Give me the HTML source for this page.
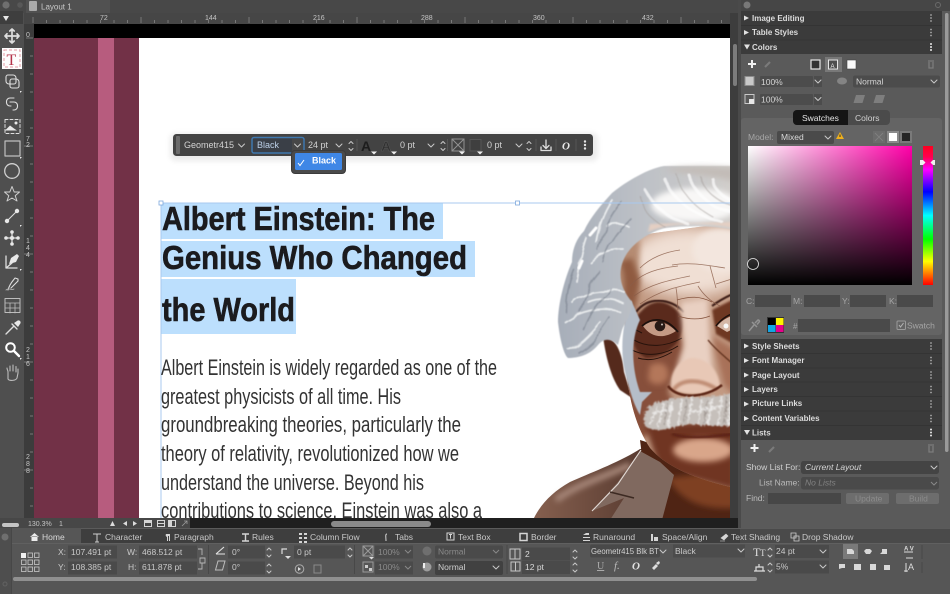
<!DOCTYPE html>
<html><head><meta charset="utf-8"><style>
html,body{margin:0;padding:0;background:#565656;width:950px;height:594px;overflow:hidden}
svg{display:block;filter:blur(.3px)}
text{font-family:"Liberation Sans",sans-serif;font-size:8px;fill:#c9c9c9}
.b{font-weight:bold;fill:#dcdcdc}
.d{fill:#8a8a8a}
.m{fill:#9d9d9d}
.f{fill:#4a4a4a}
.ic{fill:none;stroke:#dedede;stroke-width:1.3;stroke-linecap:round;stroke-linejoin:round}
.ch{fill:none;stroke:#c8c8c8;stroke-width:1;stroke-linecap:round;stroke-linejoin:round}
.r{font-size:7px;fill:#c4c4c4}
</style></head><body>
<svg width="950" height="594" viewBox="0 0 950 594" xmlns="http://www.w3.org/2000/svg">
<defs>
<linearGradient id="pk" x1="0" x2="1" y1="0" y2="0"><stop offset="0" stop-color="#fff"/><stop offset="1" stop-color="#ff00a8"/></linearGradient>
<linearGradient id="bk" x1="0" x2="0" y1="0" y2="1"><stop offset="0" stop-color="#000" stop-opacity="0"/><stop offset="1" stop-color="#000"/></linearGradient>
<linearGradient id="hue" x1="0" x2="0" y1="0" y2="1"><stop offset="0" stop-color="#ff0020"/><stop offset=".08" stop-color="#ff0050"/><stop offset=".17" stop-color="#ff00ff"/><stop offset=".33" stop-color="#0000ff"/><stop offset=".5" stop-color="#00ffff"/><stop offset=".67" stop-color="#00ff00"/><stop offset=".83" stop-color="#ffff00"/><stop offset="1" stop-color="#ff0000"/></linearGradient>
<linearGradient id="hair" x1="0" x2="1" y1="0" y2="0"><stop offset="0" stop-color="#a7aeb9"/><stop offset=".45" stop-color="#bcc0c6"/><stop offset="1" stop-color="#d2cfcc"/></linearGradient>
<linearGradient id="jack" x1="0" x2="1" y1="0" y2="0"><stop offset="0" stop-color="#86604f"/><stop offset=".5" stop-color="#5c3e33"/><stop offset="1" stop-color="#3a2019"/></linearGradient>
<filter id="b1" x="-30%" y="-30%" width="160%" height="160%"><feGaussianBlur stdDeviation="1"/></filter>
<filter id="b2" x="-40%" y="-40%" width="180%" height="180%"><feGaussianBlur stdDeviation="3"/></filter>
<filter id="b4" x="-50%" y="-50%" width="200%" height="200%"><feGaussianBlur stdDeviation="7"/></filter>
<filter id="b05" x="-10%" y="-10%" width="120%" height="120%"><feGaussianBlur stdDeviation=".45"/></filter>
<filter id="wv" x="-10%" y="-10%" width="120%" height="120%"><feTurbulence type="fractalNoise" baseFrequency=".05" numOctaves="2" seed="4"/><feDisplacementMap in="SourceGraphic" scale="7"/><feGaussianBlur stdDeviation=".6"/></filter>
<filter id="fz" x="-10%" y="-10%" width="120%" height="120%"><feTurbulence type="fractalNoise" baseFrequency=".35" numOctaves="2" seed="9"/><feDisplacementMap in="SourceGraphic" scale="5"/><feGaussianBlur stdDeviation=".7"/></filter>
<clipPath id="cv"><rect x="139" y="38" width="591" height="480"/></clipPath>
<clipPath id="fc"><path d="M620 255C612 290 630 320 625 352 627 395 635 425 650 448 665 465 690 478 735 488V222L640 235Z"/></clipPath>
</defs>

<!-- base -->
<rect width="950" height="594" fill="#565656"/>
<!-- title bar -->
<rect width="740" height="13" fill="#484848"/>
<rect x="26" y="0" width="84" height="13" fill="#515151"/>
<circle cx="6" cy="5" r="3.600" fill="#6f6f6f"/><circle cx="20" cy="5" r="2.800" fill="#585858"/>
<rect x="29" y="1" width="8" height="10" rx="1" fill="#aaa"/>
<text x="41" y="9.500" style="font-size:8px">Layout 1</text>
<!-- toolbar -->
<rect x="0" y="13" width="24" height="512" fill="#4f4f4f"/>
<rect x="0" y="11" width="23" height="13" fill="#3e3e3e"/>
<path d="M3 16h6l-3 5z" fill="#e6e6e6"/>
<!-- rulers -->
<rect x="24" y="13" width="716" height="11" fill="#464646"/>
<rect x="24" y="24" width="10" height="494" fill="#3c3c3c"/>
<path d="M33 17V23M46.500 20V23M60 20V23M73.500 20V23M87 20V23M100.500 20V23M114 20V23M127.500 20V23M141 17V23M154.500 20V23M168 20V23M181.500 20V23M195 20V23M208.500 20V23M222 20V23M235.500 20V23M249 17V23M262.500 20V23M276 20V23M289.500 20V23M303 20V23M316.500 20V23M330 20V23M343.500 20V23M357 17V23M370.500 20V23M384 20V23M397.500 20V23M411 20V23M424.500 20V23M438 20V23M451.500 20V23M465 17V23M478.500 20V23M492 20V23M505.500 20V23M519 20V23M532.500 20V23M546 20V23M559.500 20V23M573 17V23M586.500 20V23M600 20V23M613.500 20V23M627 20V23M640.500 20V23M654 20V23M667.500 20V23M681 17V23M694.500 20V23M708 20V23M721.500 20V23" stroke="#8d8d8d" stroke-width=".7"/>
<path d="M26 38H33M30 56H33M30 74H33M30 92H33M30 110H33M30 128H33M24 146H33M30 164H33M30 182H33M30 200H33M30 218H33M30 236H33M24 254H33M30 272H33M30 290H33M30 308H33M30 326H33M30 344H33M24 362H33M30 380H33M30 398H33M30 416H33M30 434H33M30 452H33M24 470H33M30 488H33M30 506H33" stroke="#8d8d8d" stroke-width=".7"/>
<text x="100" y="20" class="r">72</text><text x="205" y="20" class="r">144</text><text x="313" y="20" class="r">216</text><text x="421" y="20" class="r">288</text><text x="533" y="20" class="r">360</text><text x="642" y="20" class="r">432</text>
<g><text x="26" y="37" class="r">0</text>
<text x="26" y="141" class="r">7</text><text x="26" y="147" class="r">2</text>
<text x="26" y="243" class="r">1</text><text x="26" y="250" class="r">4</text><text x="26" y="257" class="r">4</text>
<text x="26" y="352" class="r">2</text><text x="26" y="359" class="r">1</text><text x="26" y="366" class="r">6</text>
<text x="26" y="459" class="r">2</text><text x="26" y="466" class="r">8</text><text x="26" y="473" class="r">8</text></g>

<!-- tools -->
<g class="ic">
<path d="M12 29V43M5 36H19M9.800 31 12 29 14.200 31M9.800 41 12 43 14.200 41M7 33.800 5 36 7 38.200M17 33.800 19 36 17 38.200" stroke-width="1.700"/>
<path d="M6 77a2 2 0 0 1 2-2h5a3 3 0 0 1 3 3v4a2 2 0 0 1-2 2H9a3 3 0 0 1-3-3zM10 81a2 2 0 0 1 2-2h4a3 3 0 0 1 3 3v4a2 2 0 0 1-2 2H12a2 2 0 0 1-2-2z" stroke-width="1.100"/>
<path d="M14 98H10a3.500 3.500 0 0 0-3.500 3.500v1A3.500 3.500 0 0 0 10 106h1M10 102h4a3.500 3.500 0 0 1 3.500 3.500v1a3.500 3.500 0 0 1-3.500 3.500h-1" stroke-width="1.100"/>
<rect x="5" y="119.500" width="15" height="14" stroke-dasharray="3 2" stroke-width="1"/>
<rect x="5" y="141" width="15" height="15" stroke="#bfbfbf" stroke-width="1.200"/>
<circle cx="12" cy="171" r="7.300" stroke="#d0d0d0"/>
<path d="M12 186.500 14.200 192 19.500 192 15.200 195.700 17 201 12 198 7 201 8.800 195.700 4.500 192 9.800 192Z" stroke="#d0d0d0" stroke-width="1"/>
<path d="M7 221 17 211" stroke-width="1.100"/>
<path d="M12 232V244M6 238H18"/>
<path d="M6 256V268H17M6 268 12 263"/>
<path d="M8 290C10 283 13 281 15 278L18 279 18 281 11 288" stroke-width="1.100"/>
<path d="M6 290C9 287 11 291 14 289" stroke-width=".9" stroke="#aaa"/>
<rect x="5" y="298.500" width="15" height="14" stroke="#bdbdbd" stroke-width="1"/>
<path d="M5 303H20M5 308H20M10 303V313M15 303V313" stroke="#bdbdbd" stroke-width=".8"/>
<path d="M6 334 14 326M12 324 17 329" stroke-width="1.400"/>
<circle cx="10.500" cy="347.500" r="4.300" stroke="#fff" stroke-width="2"/><path d="M14 351 19 356" stroke="#fff" stroke-width="2.400"/>
<path d="M8 379V372C8 370 7 370 7 368M10 371V366M13 371V365M16 372V366.500M18 373V369M8 379C9 381 16 381 17 378L18 373" stroke="#bdbdbd" stroke-width="1.100"/>
</g>
<path d="M5 130.500l5-5 4 3 3 2z" fill="#e8e8e8"/><circle cx="16" cy="123" r="1.500" fill="#e8e8e8"/>
<g fill="#e8e8e8"><circle cx="7" cy="221" r="2.200"/><circle cx="17" cy="211" r="2.200"/><circle cx="12" cy="232" r="1.800"/><circle cx="12" cy="244" r="1.800"/><circle cx="6" cy="238" r="1.800"/><circle cx="18" cy="238" r="1.800"/><circle cx="12" cy="238" r="2"/>
<path d="M9 264 11 258 17 254 19 256 16 262Z"/><path d="M14 323l3-2a1.500 1.500 0 0 1 3 3l-2 3z"/>
<path d="M20 91l2 0-2 2z M20 157l2 0-2 2z M20 225l2 0-2 2z M20 269l2 0-2 2z M20 358l2 0-2 2z"/></g>
<rect x="2" y="48" width="20" height="21" fill="#fdfdfd"/>
<rect x="4" y="50" width="16" height="17" fill="none" stroke="#e29aa4" stroke-dasharray="3 2" stroke-width="1"/>
<text x="6.500" y="65" style="font-family:'Liberation Serif',serif;font-size:16px;fill:#b5334a">T</text>

<!-- canvas -->
<rect x="34" y="24" width="696" height="14" fill="#000"/>
<rect x="34" y="38" width="105" height="480" fill="#723147"/>
<rect x="98" y="38" width="16" height="480" fill="#b75c7e"/>
<rect x="139" y="38" width="591" height="480" fill="#fff"/>

<g clip-path="url(#cv)">
<!-- portrait -->
<!-- jacket -->
<path d="M533 520C540 505 552 492 570 482 590 473 620 462 640 449L735 440V520Z" fill="url(#jack)"/>
<path d="M556 500C578 484 602 478 630 465" stroke="#a9897b" stroke-width="6" fill="none" filter="url(#b2)"/>
<!-- neck -->
<path d="M640 440 735 470V520H650Z" fill="#4f2414"/>
<path d="M668 478C680 500 700 510 735 508V470Z" fill="#7e3f24" filter="url(#b2)"/>
<!-- collar -->
<path d="M592 511 618 482 640 451 660 462 674 475 662 520H610L624 498Z" fill="#80695f"/>
<path d="M592 511 618 484 641 450" stroke="#e2dad5" stroke-width="1.100" fill="none"/>
<path d="M610 492 634 498" stroke="#3c2a22" stroke-width="1.500" fill="none"/>
<!-- ear -->
<path d="M603 336C616 338 622 352 624 372L632 398 620 390C610 376 605 352 603 336Z" fill="#55291a" filter="url(#b05)"/>
<!-- face -->
<g clip-path="url(#fc)">
<rect x="600" y="215" width="135" height="280" fill="#c29a83"/>
<ellipse cx="690" cy="262" rx="62" ry="34" fill="#f0dfd4" filter="url(#b4)"/>
<ellipse cx="722" cy="250" rx="30" ry="22" fill="#f3e6de" filter="url(#b2)"/>
<path d="M612 240 640 240 638 300 632 320 612 330Z" fill="#b58b72" filter="url(#b2)"/>
<path d="M618 262C626 268 624 290 624 308L634 314 640 280 632 258Z" fill="#8f5a40" filter="url(#b2)"/>
<!-- left cheek -->
<path d="M626 312 680 320 684 350 668 392 680 412 640 440 620 395Z" fill="#87503a" filter="url(#b2)"/>
<path d="M650 365C662 360 670 365 668 378 662 388 650 385 648 378Z" fill="#b4775a" filter="url(#b2)"/>
<!-- right cheek -->
<path d="M712 336 740 352V400L724 385Z" fill="#a87158" filter="url(#b2)"/>
<path d="M712 310 740 296V348L716 334Z" fill="#6e3722" filter="url(#b1)"/>
<!-- chin area -->
<path d="M645 425 735 420V490L660 470Z" fill="#6f3520" filter="url(#b2)"/>
<ellipse cx="703" cy="450" rx="30" ry="12" fill="#d9a68a" filter="url(#b2)"/>
<path d="M672 434C690 440 715 436 735 434" stroke="#5b2312" stroke-width="3" fill="none" filter="url(#b1)"/>
<!-- brow/eye -->
<path d="M636 318C650 296 668 298 682 316 688 338 668 358 646 358 630 350 630 330 636 318Z" fill="#5a2c1b" filter="url(#b1)"/>
<path d="M643 326C650 319 664 319 676 331 664 339 651 338 643 326Z" fill="#c49a85"/>
<path d="M642 326C652 317 666 317 678 332" stroke="#1c100c" stroke-width="1.800" fill="none"/>
<circle cx="660" cy="326" r="5.300" fill="#281a16"/><circle cx="662" cy="324.500" r="1" fill="#cfc4bd"/>
<path d="M634 340C648 348 666 347 682 338M632 350C648 358 666 354 678 346M638 358C650 362 662 358 672 352M642 333 628 326" stroke="#26120b" stroke-width="1" fill="none"/>
<path d="M636 312C648 296 670 298 684 312" stroke="#3c1e12" stroke-width="2.200" fill="none" filter="url(#b05)"/>
<path d="M717 326C722 320 730 316 735 315V328L727 332Z" fill="#d4b7a6"/><circle cx="726" cy="326" r="2.500" fill="#f8f8f8"/><path d="M716 326C722 318 730 314 735 313" stroke="#1c100c" stroke-width="1.500" fill="none"/>
<path d="M712 306C720 300 728 296 735 293" stroke="#3c1e12" stroke-width="2.200" fill="none" filter="url(#b05)"/>
<!-- nose bridge -->
<path d="M680 302 708 298 710 340 714 385 672 388 684 345Z" fill="#e9d0c2" filter="url(#b2)"/>
<path d="M672 388C668 372 682 358 692 358 708 358 720 372 720 388 708 396 682 396 672 388Z" fill="#e8c8b6" filter="url(#b1)"/>
<path d="M672 392C680 378 700 378 718 390" fill="none" stroke="#c08d74" stroke-width="4" filter="url(#b1)"/>
<path d="M668 386C678 400 706 398 722 385" stroke="#5d2715" stroke-width="2.500" fill="none" filter="url(#b05)"/>
<path d="M677 300C690 296 700 296 712 302M678 316C690 320 700 320 710 316" stroke="#85543e" stroke-width=".8" fill="none"/>
<path d="M708 340C716 350 722 354 735 366" stroke="#60301e" stroke-width="1.300" fill="none" filter="url(#b05)"/>
<!-- forehead lines -->
<g stroke="#8a5d48" stroke-width=".8" fill="none" stroke-opacity=".8">
<path d="M630 286C642 272 660 268 678 266M634 296C650 284 670 280 690 276M672 265C690 262 705 265 725 268M640 304C660 290 680 286 700 282M676 288C678 298 677 305 678 310M716 284 735 278M698 286C704 296 712 302 720 306M710 266 716 288M640 268C650 258 665 252 680 250"/>
</g>
</g>
<!-- mustache -->
<path d="M645 426C642 410 650 402 668 400 680 395 700 400 735 393V424C720 428 705 425 690 424 672 428 655 434 645 426Z" fill="#c6c0bb" filter="url(#fz)"/>
<g filter="url(#fz)" fill="none" stroke-linecap="round">
<path d="M650 424 657 407M658 426 664 404M668 426 672 402M678 424 682 400M688 423 692 398M698 424 702 400M708 424 712 398M718 425 722 396M728 425 732 395M654 414 672 408M690 412 722 406" stroke="#fbfbfb" stroke-width="1.800" stroke-opacity=".7"/>
<path d="M664 424 668 404M684 422 687 400M704 424 707 400M724 424 727 397" stroke="#756a64" stroke-width="1.100" stroke-opacity=".55"/>
</g>
<!-- sideburn -->
<path d="M631 300C622 325 620 350 625 372 630 392 634 405 640 415L642 402 652 392 640 392C632 370 630 340 640 320Z" fill="#b5bdc8" filter="url(#b05)"/>
<!-- hair -->
<path d="M735 166H664C650 168 628 180 612 193 600 206 590 218 584 231 575 240 572 252 572 262 564 280 558 305 558 322 560 340 564 355 568 358 578 358 590 355 598 345 604 338 610 338 618 345L622 330C626 320 632 315 632 302 622 290 618 278 622 264 628 244 650 232 665 228 690 225 715 226 735 230Z" fill="url(#hair)" filter="url(#b05)"/>
<ellipse cx="695" cy="205" rx="44" ry="17" fill="#f8f7f6" filter="url(#b2)"/>
<path d="M648 232C670 222 705 222 735 228L735 222 650 224Z" fill="#e4cfc3" filter="url(#b1)"/>
<path d="M664 170C680 166 710 166 735 168V182C710 174 680 174 664 170Z" fill="#c2bcb7" filter="url(#b2)"/>
<g fill="none" stroke-linecap="round" filter="url(#wv)">
<path d="M664 178C670 196 690 214 722 222M690 176C695 192 708 208 735 212M712 178C714 190 724 198 735 203M645 190C652 204 664 216 688 224" stroke="#fdfdfd" stroke-width="3" stroke-opacity=".7"/>
<path d="M676 174C680 190 690 204 712 216M700 176C704 190 714 200 735 207M640 196C644 210 650 220 664 226" stroke="#a39e9a" stroke-width="1.200" stroke-opacity=".5"/>
<path d="M612 200C602 215 598 230 596 242M586 238C581 252 579 268 577 282M590 262C600 252 616 250 624 250M572 302C582 292 602 288 624 292M565 322C580 312 600 306 620 312M569 350C580 345 592 332 600 322M588 302C598 298 610 298 622 302M606 225C612 222 620 222 628 226" stroke="#f6f7f8" stroke-width="1.800" stroke-opacity=".8"/>
<path d="M622 202C608 216 602 235 598 250M600 272C590 282 585 296 580 312M610 318C600 335 590 345 578 352M630 218C616 232 606 245 603 262M612 290C600 300 590 312 584 330M574 270C568 285 566 300 566 312" stroke="#6d7683" stroke-width="1.600" stroke-opacity=".5"/>
</g>
<path d="M590 235l6-7M579 268l3-7" stroke="#fff" stroke-width="3" stroke-linecap="round" filter="url(#b05)"/>
</g>

<!-- selection -->
<rect x="161" y="203" width="282" height="36" fill="#bcdffd"/>
<rect x="161" y="241" width="314" height="36" fill="#bcdffd"/>
<rect x="161" y="279" width="135" height="55" fill="#bcdffd"/>
<path d="M161 203H730" stroke="#a8c8ef" stroke-width="1"/>
<path d="M161 203V518" stroke="#a8c8ef" stroke-width="1"/>
<rect x="159" y="201" width="4" height="4" fill="#fff" stroke="#7ea9dd" stroke-width=".8"/>
<rect x="515.500" y="201" width="4" height="4" fill="#fff" stroke="#7ea9dd" stroke-width=".8"/>
<g stroke="#1b1b1e" stroke-width=".6">
<text x="162" y="230" textLength="273" lengthAdjust="spacingAndGlyphs" style="font-size:33px;font-weight:bold;fill:#1b1b1e">Albert Einstein: The</text>
<text x="162" y="269" textLength="305" lengthAdjust="spacingAndGlyphs" style="font-size:33px;font-weight:bold;fill:#1b1b1e">Genius Who Changed</text>
<text x="162" y="321" textLength="133" lengthAdjust="spacingAndGlyphs" style="font-size:33px;font-weight:bold;fill:#1b1b1e">the World</text>
</g>
<g clip-path="url(#cv)">
<text x="161" y="375" textLength="336" lengthAdjust="spacingAndGlyphs" style="font-size:22px;fill:#333">Albert Einstein is widely regarded as one of the</text>
<text x="161" y="404" textLength="240" lengthAdjust="spacingAndGlyphs" style="font-size:22px;fill:#333">greatest physicists of all time. His</text>
<text x="161" y="432" textLength="300" lengthAdjust="spacingAndGlyphs" style="font-size:22px;fill:#333">groundbreaking theories, particularly the</text>
<text x="161" y="461" textLength="298" lengthAdjust="spacingAndGlyphs" style="font-size:22px;fill:#333">theory of relativity, revolutionized how we</text>
<text x="161" y="490" textLength="263" lengthAdjust="spacingAndGlyphs" style="font-size:22px;fill:#333">understand the universe. Beyond his</text>
<text x="161" y="518" textLength="321" lengthAdjust="spacingAndGlyphs" style="font-size:22px;fill:#333">contributions to science, Einstein was also a</text>
</g>

<!-- floating toolbar -->
<rect x="170" y="133" width="428" height="28" rx="6" fill="#000" opacity=".08" filter="url(#b2)"/>
<rect x="173" y="134" width="420" height="22" rx="3.500" fill="#434343"/>
<rect x="176" y="136" width="4" height="18" rx="1" fill="#6b6b6b"/>
<text x="184" y="148" style="font-size:9px;fill:#d2d2d2">Geometr415</text>
<path d="M238.500 144l3 3 3-3" class="ch"/>
<rect x="252" y="137.500" width="52" height="15.500" rx="2" fill="#3a3f47" stroke="#3f78ae" stroke-width="1.500"/>
<text x="257" y="148" style="font-size:9px;fill:#bcd0e8">Black</text>
<rect x="292" y="139" width="11" height="12.500" fill="#474747"/>
<path d="M294.500 144l3 3 3-3" class="ch"/>
<text x="308" y="148" style="font-size:9px;fill:#d2d2d2">24 pt</text>
<path d="M336 144l3 3 3-3" class="ch"/><path d="M349 143.500l2-2 2 2M349 148.500l2 2 2-2" class="ch"/>
<path d="M357 139V151M447.500 139V151M536 139V151M556 139V151M576 139V151" stroke="#5a5a5a" stroke-width=".8"/>
<text x="361" y="151" style="font-size:14px;font-weight:bold;fill:#1d1d1d">A</text>
<text x="381" y="151" style="font-size:14px;fill:#303030;font-weight:bold;stroke:#5a5a5a;stroke-width:.4">A</text>
<path d="M371 151.500h6l-3 3zM391 151.500h6l-3 3zM459 151.500h6l-3 3zM477 151.500h6l-3 3z" fill="#efefef"/>
<text x="400" y="148" style="font-size:9px;fill:#d2d2d2">0 pt</text>
<path d="M428 144l3 3 3-3" class="ch"/><path d="M441 143.500l2-2 2 2M441 148.500l2 2 2-2" class="ch"/>
<rect x="452" y="139" width="12" height="12" fill="none" stroke="#929292" stroke-width="1"/><path d="M452 139 464 151M464 139 452 151" stroke="#929292" stroke-width="1"/>
<rect x="470" y="139.500" width="11" height="11.500" fill="#3f3f3f" stroke="#555" stroke-width="1"/>
<text x="487" y="148" style="font-size:9px;fill:#d2d2d2">0 pt</text>
<path d="M516 144l3 3 3-3" class="ch"/><path d="M527 143.500l2-2 2 2M527 148.500l2 2 2-2" class="ch"/>
<path d="M546 140V148M543 145.500l3 3 3-3M541 147v3.500h10V147" class="ic" stroke-width="1.100"/>
<text x="562" y="149.500" style="font-family:'Liberation Serif',serif;font-size:11px;font-weight:bold;font-style:italic;fill:#e8e8e8">O</text>
<g fill="#e5e5e5"><circle cx="585" cy="141.500" r="1.200"/><circle cx="585" cy="145" r="1.200"/><circle cx="585" cy="148.500" r="1.200"/></g>
<!-- dropdown -->
<rect x="291.500" y="150.500" width="54" height="23" rx="3.500" fill="#4a4a4a" stroke="#3b3b3b" stroke-width="1"/>
<rect x="295" y="153" width="47" height="17" rx="1.500" fill="#3f87e6"/>
<path d="M298 163l2 2.500 4-5.500" fill="none" stroke="#fff" stroke-width="1"/>
<text x="312" y="163.500" style="font-size:9px;font-weight:bold;fill:#fff">Black</text>

<!-- canvas right edge -->
<rect x="730" y="13" width="10" height="505" fill="#3d3d3d"/>
<rect x="733" y="44" width="4" height="42" rx="2" fill="#7c7c7c"/>

<!-- status bar -->
<rect x="0" y="518" width="190" height="10" fill="#474747"/>
<rect x="190" y="518" width="550" height="10" fill="#1f1f1f"/>
<rect x="331" y="521" width="100" height="6" rx="3" fill="#8a8a8a"/>
<rect x="2" y="523" width="17" height="4" rx="2" fill="#c4c4c4"/>
<text x="28" y="526" style="font-size:7px;fill:#c5c5c5">130.3%</text>
<text x="59" y="526" style="font-size:7px;fill:#c5c5c5">1</text>
<path d="M110 526l2.500-5 2.500 5zM127 521v5l-4-2.500zM133 521v5l4-2.500z" fill="#dcdcdc"/>
<g fill="none" stroke="#d5d5d5" stroke-width="1"><rect x="144.500" y="520.500" width="7" height="6"/><rect x="157.500" y="520.500" width="7" height="6"/><path d="M157.500 523.500h7"/><rect x="168.500" y="520.500" width="7" height="6"/></g>
<rect x="169" y="521" width="3" height="5" fill="#d5d5d5"/><rect x="145" y="521" width="6" height="2" fill="#d5d5d5"/>
<path d="M182 526l5-5M184 521h3v3" stroke="#9a9a9a" stroke-width=".8" fill="none"/>

<!-- tab bar -->
<rect x="0" y="528" width="740" height="15" fill="#3e3e3e"/>
<rect x="740" y="528" width="210" height="15" fill="#4a4a4a"/>
<rect x="0" y="528" width="950" height="1" fill="#5b5b5b"/>
<rect x="0" y="528" width="81" height="15" fill="#565656"/>
<rect x="0" y="528" width="11" height="66" fill="#4e4e4e"/>
<rect x="11" y="528" width="1" height="66" fill="#474747"/>
<circle cx="5" cy="537" r="3.500" fill="#6f6f6f"/>
<circle cx="5" cy="584" r="2" fill="none" stroke="#626262"/>
<rect x="12" y="543" width="938" height="1" fill="#606060"/>
<path d="M30 537l4.500-4 4.500 4M31.500 536.500v4.500h6v-4.500z" fill="#ececec"/>
<text x="42" y="540" style="font-size:8.500px;fill:#d8d8d8">Home</text>
<text x="105" y="540" style="font-size:8.500px">Character</text>
<text x="174" y="540" style="font-size:8.500px">Paragraph</text>
<text x="252" y="540" style="font-size:8.500px">Rules</text>
<text x="310" y="540" style="font-size:8.500px">Column Flow</text>
<text x="395" y="540" style="font-size:8.500px">Tabs</text>
<text x="458" y="540" style="font-size:8.500px">Text Box</text>
<text x="531" y="540" style="font-size:8.500px">Border</text>
<text x="593" y="540" style="font-size:8.500px">Runaround</text>
<text x="662" y="540" style="font-size:8.500px">Space/Align</text>
<text x="731" y="540" style="font-size:8.500px">Text Shading</text>
<text x="802" y="540" style="font-size:8.500px">Drop Shadow</text>
<!-- tab icons -->
<path d="M93 534h8M97 534v8M95 542h4" stroke="#cfcfcf" fill="none"/>
<path d="M166 534h4v7h-1v-5h-1v5h-1v-4a2 2 0 0 1 -1-3z" fill="#d5d5d5"/>
<path d="M242 534h7M242 541h7M245.500 534v7" stroke="#d5d5d5" fill="none" stroke-width="1.400"/>
<path d="M299 533h3v2h-3zM304 533h3v2h-3zM299 537h3v2h-3zM304 537h3v2h-3zM299 541h3v2h-3zM304 541h3v2h-3z" fill="#d5d5d5"/>
<path d="M387 534c-2 0-1 3-1 7" stroke="#d5d5d5" fill="none"/>
<rect x="447" y="533" width="7" height="7" fill="none" stroke="#d5d5d5"/><path d="M449 534.500h3M450.500 534.500v4" stroke="#d5d5d5" fill="none"/>
<rect x="520" y="533.500" width="7" height="7" fill="none" stroke="#d5d5d5" stroke-width="1.500"/>
<path d="M583 535h6v-2h-3zM583 537h7v1h-7zM583 540h7v1h-7z" fill="#d5d5d5"/>
<path d="M651 534h2v7h-2zM654 537h4v4h-4z" fill="#d5d5d5"/>
<path d="M721 538l5-4 2 2-4 4zM720 541h5" stroke="#d5d5d5" fill="#d5d5d5" stroke-width=".6"/>
<path d="M791 533h5v5h-5zM794 536h5v5h-5z" fill="none" stroke="#cfcfcf" stroke-width=".8"/>

<!-- props: reference point grid -->
<g fill="none" stroke="#c9c9c9" stroke-width=".8">
<rect x="28" y="553" width="4.500" height="4.500"/><rect x="34.500" y="553" width="4.500" height="4.500"/>
<rect x="21.500" y="560" width="4.500" height="4.500"/><rect x="28" y="560" width="4.500" height="4.500"/><rect x="34.500" y="560" width="4.500" height="4.500"/>
<rect x="21.500" y="567" width="4.500" height="4.500"/><rect x="28" y="567" width="4.500" height="4.500"/><rect x="34.500" y="567" width="4.500" height="4.500"/>
</g>
<rect x="21" y="553" width="5" height="5" fill="#f2f2f2"/>
<text x="58" y="555" style="font-size:8.500px">X:</text>
<text x="58" y="570" style="font-size:8.500px">Y:</text>
<rect x="68" y="545.500" width="49" height="13" class="f"/><rect x="68" y="561.500" width="49" height="13" class="f"/>
<text x="71" y="555" style="font-size:8.500px">107.491 pt</text><text x="71" y="570" style="font-size:8.500px">108.385 pt</text>
<text x="127" y="555" style="font-size:8.500px">W:</text><text x="128" y="570" style="font-size:8.500px">H:</text>
<rect x="139" y="545.500" width="58" height="13" class="f"/><rect x="139" y="561.500" width="58" height="13" class="f"/>
<text x="142" y="555" style="font-size:8.500px">468.512 pt</text><text x="142" y="570" style="font-size:8.500px">611.878 pt</text>
<path d="M198 549h4v6M198 569h4v-6M200 558h5v5h-5z" fill="none" stroke="#b5b5b5" stroke-width=".9"/>
<path d="M208.500 545V574M354.500 545V574M507 545V574M922 545V559M922 562V573" stroke="#484848"/>
<path d="M216 554 224 547M216 554H225" fill="none" stroke="#e5e5e5" stroke-width="1.100"/>
<path d="M218 561h7l-2.500 9h-7z" fill="none" stroke="#bdbdbd" stroke-width="1"/>
<rect x="228" y="545.500" width="37" height="13" class="f"/><rect x="228" y="561.500" width="37" height="13" class="f"/>
<text x="232" y="555" style="font-size:8.500px">0°</text><text x="232" y="570" style="font-size:8.500px">0°</text>
<path d="M267 550l2-2 2 2M267 555l2 2 2-2M267 566l2-2 2 2M267 571l2 2 2-2" class="ch"/>
<path d="M282 554v-5h5" fill="none" stroke="#dcdcdc" stroke-width="1.200"/><path d="M285 556h6l-3 3z" fill="#e0e0e0"/>
<rect x="294" y="545.500" width="51" height="13" class="f"/><text x="297" y="555" style="font-size:8.500px">0 pt</text>
<circle cx="299.500" cy="569" r="4.300" fill="none" stroke="#aaa"/><path d="M298 567l3 2-3 2z" fill="#ddd"/>
<rect x="314" y="565" width="7" height="8" fill="none" stroke="#8a8a8a"/>
<path d="M348 550l2-2 2 2M348 555l2 2 2-2" class="ch"/>
<rect x="363" y="546" width="10" height="10" fill="none" stroke="#9b9b9b"/><path d="M363 546l10 10M373 546l-10 10" stroke="#9b9b9b"/><path d="M369 557h5l-2.500 2.500z" fill="#ddd"/>
<rect x="363" y="562" width="10" height="10" fill="none" stroke="#9b9b9b"/><rect x="365" y="565" width="3" height="3" fill="#ccc"/><rect x="369" y="568" width="3" height="3" fill="#ccc"/>
<rect x="375" y="545.500" width="38" height="13" class="f"/><rect x="375" y="561.500" width="38" height="13" class="f"/>
<text x="378" y="555" class="d" style="font-size:8.500px">100%</text><text x="378" y="570" class="d" style="font-size:8.500px">100%</text>
<path d="M405 550l3 3 3-3M405 566l3 3 3-3" fill="none" stroke="#888"/>
<circle cx="427" cy="551" r="4.500" fill="#6f6f6f"/><circle cx="427" cy="567" r="4.500" fill="#9c9c9c"/><path d="M424 563v5" stroke="#eee" stroke-width="2"/>
<rect x="435" y="545.500" width="68" height="13" rx="2" class="f"/><rect x="435" y="561" width="68" height="14" rx="2" fill="#414141"/>
<text x="438" y="554.500" class="d" style="font-size:8.500px">Normal</text><text x="438" y="570" style="font-size:8.500px;fill:#d0d0d0">Normal</text>
<path d="M493 550l3 3 3-3" fill="none" stroke="#888"/><path d="M493 566l3 3 3-3" class="ch"/>
<rect x="510" y="549" width="10" height="10" fill="none" stroke="#c5c5c5" stroke-width="1"/><path d="M515 549v10" stroke="#c5c5c5"/>
<rect x="511" y="562" width="9" height="9" fill="none" stroke="#c5c5c5"/><path d="M515.500 562v9" stroke="#c5c5c5"/>
<rect x="522" y="547.500" width="48" height="13" class="f"/><rect x="522" y="561" width="48" height="13" class="f"/>
<text x="525" y="557" style="font-size:8.500px;fill:#dadada">2</text><text x="525" y="570" style="font-size:8.500px;fill:#dadada">12 pt</text>
<path d="M573 552l2-2 2 2M573 557l2 2 2-2M573 565l2-2 2 2M573 570l2 2 2-2" class="ch"/>
<rect x="590" y="544.500" width="70" height="13" rx="2" fill="#494949"/>
<text x="591" y="554" textLength="68" lengthAdjust="spacingAndGlyphs" style="font-size:8.500px;fill:#d0d0d0">Geometr415 Blk BT</text>
<path d="M660 550l3 3 3-3" class="ch"/>
<rect x="673" y="544.500" width="72" height="13" fill="#4c4c4c"/>
<text x="675" y="554" style="font-size:8.500px">Black</text>
<path d="M738 549l3 3 3-3" class="ch"/>
<text x="597" y="569" style="font-family:'Liberation Serif',serif;font-size:10px;text-decoration:underline;fill:#aaa">U</text>
<text x="614" y="569" style="font-family:'Liberation Serif',serif;font-size:11px;font-style:italic;fill:#bbb">f.</text>
<text x="632" y="569.500" style="font-family:'Liberation Serif',serif;font-size:11px;font-style:italic;font-weight:bold;fill:#e0e0e0">O</text>
<path d="M652 568l4-4 2 2-4 4zM656 563l3-2 1 2-2 2" fill="#ddd"/>
<text x="753" y="556" style="font-family:'Liberation Serif',serif;font-size:12px;fill:#dcdcdc">T</text><text x="760" y="556" style="font-family:'Liberation Serif',serif;font-size:9px;fill:#dcdcdc">T</text>
<path d="M754 571h11M756 571v-4h7v4M759 567v-3" fill="none" stroke="#ddd" stroke-width="1.200"/>
<path d="M768 550l2-2 2 2M768 555l2 2 2-2M768 565l2-2 2 2M768 570l2 2 2-2" class="ch"/>
<rect x="775" y="545" width="54" height="13" class="f"/><rect x="775" y="560.500" width="54" height="13" class="f"/>
<text x="776" y="554" style="font-size:8.500px">24 pt</text><text x="776" y="569.500" style="font-size:8.500px">5%</text>
<path d="M820 550l3 3 3-3M820 565l3 3 3-3" class="ch"/>
<rect x="843" y="544" width="15" height="15" fill="#7a7a7a"/>
<g fill="#d8d8d8">
<path d="M847 549h5l2 2v3h-7zM866 549h4l2 2-2 3h-4l-2-3zM882 549h5v5h-7l2-2z"/>
<path d="M839 564h6v4h-3l-3 1zM854 564h7v6h-7zM870 564h6v6h-6zM884 565h6v5h-6z"/>
</g>
<path d="M904 552h9M906 558h7" stroke="#dcdcdc" fill="none"/>
<text x="904" y="550.500" style="font-size:6px;font-weight:bold;fill:#ddd">A V</text>
<path d="M906 563v9M908 571h-4" stroke="#ddd" fill="none"/>
<text x="908" y="570" style="font-size:9px;fill:#ddd">A</text>
<!-- bottom scroll -->
<rect x="13" y="577" width="744" height="4" rx="2" fill="#909090"/>

<!-- right panel -->
<rect x="740" y="0" width="210" height="528" fill="#5a5a5a"/>
<rect x="738" y="0" width="3" height="528" fill="#4a4a4a"/>
<rect x="741" y="0" width="209" height="11" fill="#464646"/>
<circle cx="747" cy="5" r="3.500" fill="#787878"/><circle cx="938" cy="5" r="2.500" fill="none" stroke="#6a6a6a"/>
<rect x="945" y="13" width="3.500" height="439" rx="1.700" fill="#9a9a9a"/>
<rect x="741" y="11" width="201" height="43" fill="#3b3b3b"/>
<path d="M741 25.500H942M741 40H942" stroke="#343434"/>
<path d="M744 15.500l5 2.500-5 2.500zM744 30l5 2.500-5 2.500z" fill="#e2e2e2"/><path d="M744 44.500h6l-3 5z" fill="#e2e2e2"/>
<text x="752" y="21" class="b">Image Editing</text>
<text x="752" y="35" class="b">Table Styles</text>
<text x="752" y="50" class="b">Colors</text>
<g fill="#a8a8a8"><circle cx="931" cy="15" r=".9"/><circle cx="931" cy="18" r=".9"/><circle cx="931" cy="21" r=".9"/><circle cx="931" cy="29.500" r=".9"/><circle cx="931" cy="32.500" r=".9"/><circle cx="931" cy="35.500" r=".9"/></g>
<g fill="#e8e8e8"><circle cx="931" cy="44" r="1"/><circle cx="931" cy="47" r="1"/><circle cx="931" cy="50" r="1"/></g>
<path d="M752 60v8M748 64h8" stroke="#f0f0f0" stroke-width="2"/>
<path d="M765 67l5-5" stroke="#7b7b7b" stroke-width="2"/>
<rect x="825" y="57" width="17" height="15" fill="#787878"/>
<rect x="811" y="60" width="9" height="9" fill="#333" stroke="#e6e6e6" stroke-width="1.200"/>
<rect x="828.500" y="60" width="9" height="9" fill="#4e4e4e" stroke="#e6e6e6" stroke-width="1"/><text x="830.500" y="68" style="font-size:6px;fill:#eee">A</text>
<rect x="847" y="60" width="9" height="9" fill="#fafafa" stroke="#444" stroke-width=".6"/>
<path d="M928 61h6M929 62v6h4v-6" fill="none" stroke="#7c7c7c" stroke-width="1.300"/>
<rect x="745" y="76.500" width="9" height="9" fill="#c9c9c9" stroke="#8d8d8d"/>
<rect x="760" y="76" width="53" height="11" rx="1" fill="#4c4c4c"/><rect x="814" y="76" width="8" height="11" fill="#4c4c4c"/>
<text x="761" y="85" style="font-size:8.500px;fill:#d4d4d4">100%</text><path d="M815 80l3 3 3-3" class="ch"/>
<ellipse cx="842" cy="81" rx="5" ry="3.500" fill="#848484"/>
<rect x="853" y="75.500" width="87" height="12" rx="2" fill="#4c4c4c"/><text x="856" y="84.500" style="font-size:8.500px;fill:#d4d4d4">Normal</text><path d="M931 80l3 3 3-3" class="ch"/>
<rect x="745" y="94.500" width="9" height="9" fill="none" stroke="#c9c9c9"/><rect x="749" y="99" width="5" height="5" fill="#e8e8e8"/>
<rect x="760" y="94" width="53" height="11" rx="1" fill="#4c4c4c"/><rect x="814" y="94" width="8" height="11" fill="#4c4c4c"/>
<text x="761" y="102.500" style="font-size:8.500px;fill:#d4d4d4">100%</text><path d="M815 97.500l3 3 3-3" class="ch"/>
<path d="M856 95h9l-2.500 8h-9zM876 95h9l-2.500 8h-9z" fill="#7e7e7e"/>
<rect x="741" y="118" width="201" height="217" rx="3" fill="#646464"/>
<rect x="793" y="110" width="97" height="15" rx="4" fill="#4b4b4b"/>
<path d="M797 110h51v15h-51a4 4 0 0 1-4-4v-7a4 4 0 0 1 4-4z" fill="#151515"/>
<text x="802" y="121" style="font-size:8.500px;fill:#e4e4e4">Swatches</text>
<text x="855" y="121" style="font-size:8.500px;fill:#d2d2d2">Colors</text>
<text x="748" y="140" style="font-size:8.500px;fill:#a5a5a5">Model:</text>
<rect x="777" y="131" width="57" height="13" rx="2" fill="#4a4a4a"/>
<text x="781" y="140" style="font-size:8.500px;fill:#dadada">Mixed</text><path d="M825 136l3 3 3-3" class="ch"/>
<path d="M840 132l4 7h-8z" fill="#eeb01d"/><path d="M840 134.500v2.500" stroke="#2a2a2a"/>
<rect x="873" y="131" width="12" height="12" fill="#6c6c6c"/><path d="M875 133l8 8M883 133l-8 8" stroke="#7f7f7f"/>
<rect x="887" y="131" width="12" height="12" fill="#8a8a8a"/><rect x="889" y="133" width="8" height="8" fill="#fff"/>
<rect x="900" y="131" width="12" height="12" fill="#7a7a7a"/><rect x="902" y="133" width="8" height="8" fill="#252525"/>
<rect x="748" y="146" width="164" height="139" fill="url(#pk)"/>
<rect x="748" y="146" width="164" height="139" fill="url(#bk)"/>
<circle cx="753" cy="264" r="5.500" fill="none" stroke="#e9e9e9" stroke-width=".8"/>
<rect x="923" y="146" width="10" height="139" fill="url(#hue)"/>
<path d="M920 160h3l2.500 2.500-2.500 2.500h-3zM935 160h-2l-2.500 2.500 2.500 2.500h2z" fill="#f0f0f0"/>
<g fill="#4a4a4a"><rect x="755" y="295" width="36" height="12"/><rect x="804" y="295" width="36" height="12"/><rect x="850" y="295" width="36" height="12"/><rect x="897" y="295" width="36" height="12"/><rect x="798" y="319" width="92" height="13"/></g>
<text x="746" y="304" style="font-size:8.500px;fill:#a5a5a5">C:</text><text x="793" y="304" style="font-size:8.500px;fill:#a5a5a5">M:</text><text x="842" y="304" style="font-size:8.500px;fill:#a5a5a5">Y:</text><text x="889" y="304" style="font-size:8.500px;fill:#a5a5a5">K:</text>
<path d="M749 331l5-6M752 322l5 5M755 323l3-3a1.500 1.500 0 0 1 1.500 1.500l-2.500 3" fill="none" stroke="#939393" stroke-width="1.500"/>
<rect x="767" y="317" width="17" height="16" fill="#333"/>
<rect x="768" y="318" width="7.500" height="7" fill="#000"/><rect x="776" y="318" width="7.500" height="7" fill="#fff200"/><rect x="768" y="325" width="7.500" height="7" fill="#12a6e4"/><rect x="776" y="325" width="7.500" height="7" fill="#e6008a"/>
<text x="793" y="329" style="font-size:8px;fill:#a5a5a5">#</text>
<rect x="897" y="321" width="8.500" height="8.500" rx="1" fill="none" stroke="#9a9a9a"/><path d="M899 325l1.500 2 3-4" fill="none" stroke="#b5b5b5"/>
<text x="907" y="328.500" style="font-size:8.500px;fill:#a5a5a5">Swatch</text>

<rect x="741" y="339" width="201" height="101" fill="#3b3b3b"/>
<path d="M741 353.500H942M741 368H942M741 382H942M741 396.500H942M741 411H942M741 425.500H942" stroke="#343434"/>
<g fill="#e2e2e2"><path d="M744 343.500l5 2.500-5 2.500zM744 358l5 2.500-5 2.500zM744 372.500l5 2.500-5 2.500zM744 387l5 2.500-5 2.500zM744 401.500l5 2.500-5 2.500zM744 416l5 2.500-5 2.500zM744 430h6l-3 5z"/></g>
<text x="752" y="349" class="b">Style Sheets</text>
<text x="752" y="363" class="b">Font Manager</text>
<text x="752" y="378" class="b">Page Layout</text>
<text x="752" y="392" class="b">Layers</text>
<text x="752" y="406" class="b">Picture Links</text>
<text x="752" y="421" class="b">Content Variables</text>
<text x="752" y="435.500" class="b">Lists</text>
<g fill="#a8a8a8"><circle cx="931" cy="343" r=".9"/><circle cx="931" cy="346" r=".9"/><circle cx="931" cy="349" r=".9"/><circle cx="931" cy="357.500" r=".9"/><circle cx="931" cy="360.500" r=".9"/><circle cx="931" cy="363.500" r=".9"/><circle cx="931" cy="372" r=".9"/><circle cx="931" cy="375" r=".9"/><circle cx="931" cy="378" r=".9"/><circle cx="931" cy="386.500" r=".9"/><circle cx="931" cy="389.500" r=".9"/><circle cx="931" cy="392.500" r=".9"/><circle cx="931" cy="401" r=".9"/><circle cx="931" cy="404" r=".9"/><circle cx="931" cy="407" r=".9"/><circle cx="931" cy="415.500" r=".9"/><circle cx="931" cy="418.500" r=".9"/><circle cx="931" cy="421.500" r=".9"/></g>
<g fill="#e8e8e8"><circle cx="931" cy="429.500" r="1"/><circle cx="931" cy="432.500" r="1"/><circle cx="931" cy="435.500" r="1"/></g>
<path d="M754.500 444v8M750.500 448h8" stroke="#f0f0f0" stroke-width="2"/>
<path d="M769 452l5-5" stroke="#7b7b7b" stroke-width="2"/>
<path d="M928 445h6M929 446v6h4v-6" fill="none" stroke="#7c7c7c" stroke-width="1.300"/>
<text x="746" y="470" style="font-size:8.500px;fill:#d0d0d0">Show List For:</text>
<rect x="801" y="461" width="138" height="13" rx="2.500" fill="#444"/>
<text x="805" y="470" style="font-size:8.500px;font-style:italic;fill:#d8d8d8">Current Layout</text><path d="M931 466l3 3 3-3" class="ch"/>
<text x="759" y="485.500" style="font-size:8.500px;fill:#bbb">List Name:</text>
<rect x="801" y="477" width="138" height="12.500" rx="2.500" fill="#4a4a4a"/>
<text x="805" y="485.500" style="font-size:8.500px;font-style:italic;fill:#828282">No Lists</text><path d="M931 482l3 3 3-3" fill="none" stroke="#888"/>
<text x="746" y="501" style="font-size:8.500px;fill:#bbb">Find:</text>
<rect x="768" y="493" width="73" height="11" fill="#474747"/>
<rect x="846" y="493" width="43" height="11" rx="2" fill="#6d6d6d"/><rect x="896" y="493" width="43" height="11" rx="2" fill="#6d6d6d"/>
<text x="855" y="501.500" style="font-size:8.500px;fill:#8c8c8c">Update</text><text x="909" y="501.500" style="font-size:8.500px;fill:#8c8c8c">Build</text>
</svg>
</body></html>
